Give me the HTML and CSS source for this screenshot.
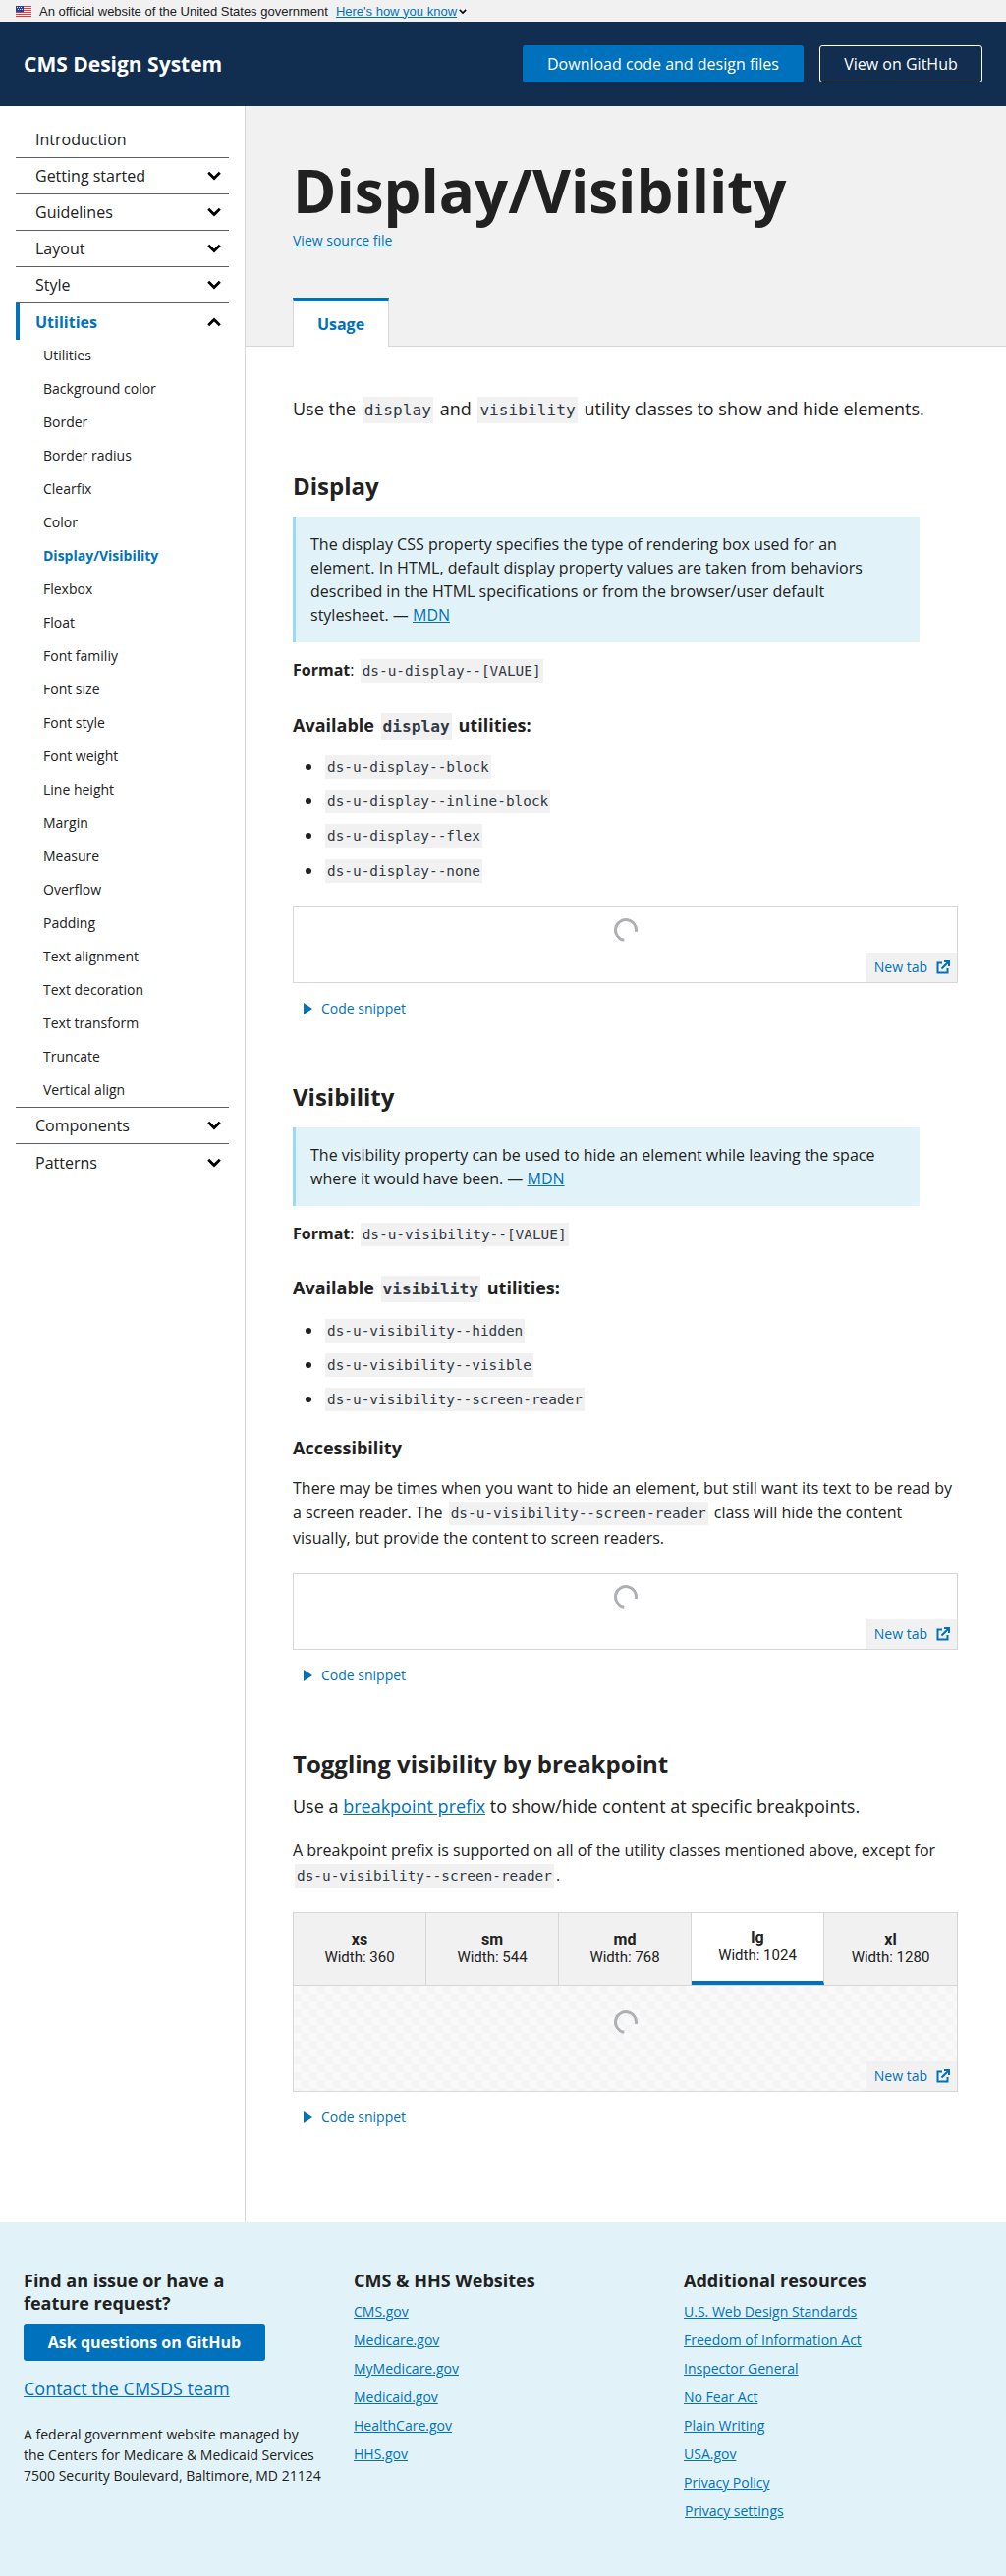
FILE: index.html
```html
<!DOCTYPE html>
<html lang="en">
<head>
    <meta charset="UTF-8">
    <meta name="viewport" content="width=device-width, initial-scale=1.0">
    <title>Display/Visibility</title>
    <link rel="stylesheet" href="styles.css">
</head>
<body>
    <div class="gov-banner">
        <svg class="flag" viewBox="0 0 16 11" width="16" height="11">
            <rect width="16" height="11" fill="#fff"/>
            <path d="M0 0h16v1H0zM0 2h16v1H0zM0 4h16v1H0zM0 6h16v1H0zM0 8h16v1H0zM0 10h16v1H0z" fill="#e0393e"/>
            <rect width="8" height="6" fill="#2e3f8f"/>
            <path d="M1 1h1v1H1zM3 1h1v1H3zM5 1h1v1H5zM2 3h1v1H2zM4 3h1v1H4zM6 3h1v1H6z" fill="#dfe3f5"/>
        </svg>
        <span>An official website of the United States government</span>
        <a href="#">Here's how you know</a>
        <svg class="gov-chevron" viewBox="0 0 10 6" width="8" height="5"><path d="M1 1l4 4 4-4" fill="none" stroke="#000" stroke-width="2"/></svg>
    </div>

    <header class="site-header">
        <div class="site-title">CMS Design System</div>
        <div class="header-actions">
            <a class="btn btn-primary" href="#">Download code and design files</a>
            <a class="btn btn-outline" href="#">View on GitHub</a>
        </div>
    </header>

    <div class="layout">
        <nav class="sidebar">
            <ul class="nav">
                <li class="nav-item">Introduction</li>
                <li class="nav-item">Getting started <svg class="chev" viewBox="0 0 14 10"><path d="M1.200 1.800L7 7.500l5.800-5.700" /></svg></li>
                <li class="nav-item">Guidelines <svg class="chev" viewBox="0 0 14 10"><path d="M1.200 1.800L7 7.500l5.800-5.700" /></svg></li>
                <li class="nav-item">Layout <svg class="chev" viewBox="0 0 14 10"><path d="M1.200 1.800L7 7.500l5.800-5.700" /></svg></li>
                <li class="nav-item">Style <svg class="chev" viewBox="0 0 14 10"><path d="M1.200 1.800L7 7.500l5.800-5.700" /></svg></li>
                <li class="nav-item nav-item-open">Utilities <svg class="chev" viewBox="0 0 14 10"><path d="M1.200 8.200L7 2.500l5.800 5.700" /></svg></li>
            </ul>
            <ul class="subnav">
                <li>Utilities</li>
                <li>Background color</li>
                <li>Border</li>
                <li>Border radius</li>
                <li>Clearfix</li>
                <li>Color</li>
                <li class="current">Display/Visibility</li>
                <li>Flexbox</li>
                <li>Float</li>
                <li>Font familiy</li>
                <li>Font size</li>
                <li>Font style</li>
                <li>Font weight</li>
                <li>Line height</li>
                <li>Margin</li>
                <li>Measure</li>
                <li>Overflow</li>
                <li>Padding</li>
                <li>Text alignment</li>
                <li>Text decoration</li>
                <li>Text transform</li>
                <li>Truncate</li>
                <li>Vertical align</li>
            </ul>
            <ul class="nav nav-end">
                <li class="nav-item">Components <svg class="chev" viewBox="0 0 14 10"><path d="M1.200 1.800L7 7.500l5.800-5.700" /></svg></li>
                <li class="nav-item">Patterns <svg class="chev" viewBox="0 0 14 10"><path d="M1.200 1.800L7 7.500l5.800-5.700" /></svg></li>
            </ul>
        </nav>

        <main class="main">
            <div class="hero">
                <h1>Display/Visibility</h1>
                <a class="source-link" href="#">View source file</a>
                <div class="tabs"><div class="tab">Usage</div></div>
            </div>

            <div class="content">
                <p class="lead">Use the <code>display</code> and <code>visibility</code> utility classes to show and hide elements.</p>

                <h2>Display</h2>
                <div class="callout">The display CSS property specifies the type of rendering box used for an element. In HTML, default display property values are taken from behaviors described in the HTML specifications or from the browser/user default stylesheet. — <a href="#">MDN</a></div>
                <p class="format"><strong>Format</strong>: <code>ds-u-display--[VALUE]</code></p>
                <h3>Available <code>display</code> utilities:</h3>
                <ul class="util-list">
                    <li><code>ds-u-display--block</code></li>
                    <li><code>ds-u-display--inline-block</code></li>
                    <li><code>ds-u-display--flex</code></li>
                    <li><code>ds-u-display--none</code></li>
                </ul>
                <div class="preview">
                    <div class="spinner"></div>
                    <a class="new-tab" href="#">New tab <svg viewBox="0 0 14 14" width="14" height="14"><path d="M11.500 8v4.500h-10v-10H6" class="ext"/><path d="M5.500 8.500L12.500 1.500M8 1h5v5" class="ext"/></svg></a>
                </div>
                <div class="snippet"><span class="tri"></span>Code snippet</div>

                <h2 class="section-2">Visibility</h2>
                <div class="callout">The visibility property can be used to hide an element while leaving the space where it would have been. — <a href="#">MDN</a></div>
                <p class="format"><strong>Format</strong>: <code>ds-u-visibility--[VALUE]</code></p>
                <h3>Available <code>visibility</code> utilities:</h3>
                <ul class="util-list">
                    <li><code>ds-u-visibility--hidden</code></li>
                    <li><code>ds-u-visibility--visible</code></li>
                    <li><code>ds-u-visibility--screen-reader</code></li>
                </ul>
                <h4>Accessibility</h4>
                <p class="body-text">There may be times when you want to hide an element, but still want its text to be read by a screen reader. The <code>ds-u-visibility--screen-reader</code> class will hide the content visually, but provide the content to screen readers.</p>
                <div class="preview preview-after-text">
                    <div class="spinner"></div>
                    <a class="new-tab" href="#">New tab <svg viewBox="0 0 14 14" width="14" height="14"><path d="M11.500 8v4.500h-10v-10H6" class="ext"/><path d="M5.500 8.500L12.500 1.500M8 1h5v5" class="ext"/></svg></a>
                </div>
                <div class="snippet"><span class="tri"></span>Code snippet</div>

                <h2 class="section-2 section-tight">Toggling visibility by breakpoint</h2>
                <p class="intro-text">Use a <a href="#">breakpoint prefix</a> to show/hide content at specific breakpoints.</p>
                <p class="breakpoint-note">A breakpoint prefix is supported on all of the utility classes mentioned above, except for <code>ds-u-visibility--screen-reader</code>.</p>
                <div class="breakpoints">
                    <div class="bp-tabs">
                        <div class="bp-tab"><b>xs</b><span>Width: 360</span></div>
                        <div class="bp-tab"><b>sm</b><span>Width: 544</span></div>
                        <div class="bp-tab"><b>md</b><span>Width: 768</span></div>
                        <div class="bp-tab bp-tab-active"><b>lg</b><span>Width: 1024</span></div>
                        <div class="bp-tab"><b>xl</b><span>Width: 1280</span></div>
                    </div>
                    <div class="bp-frame">
                        <div class="spinner"></div>
                        <a class="new-tab" href="#">New tab <svg viewBox="0 0 14 14" width="14" height="14"><path d="M11.500 8v4.500h-10v-10H6" class="ext"/><path d="M5.500 8.500L12.500 1.500M8 1h5v5" class="ext"/></svg></a>
                    </div>
                </div>
                <div class="snippet"><span class="tri"></span>Code snippet</div>
            </div>
        </main>
    </div>

    <footer class="footer">
        <div class="footer-col footer-col-first">
            <h5>Find an issue or have a feature request?</h5>
            <a class="btn btn-primary btn-ask" href="#">Ask questions on GitHub</a>
            <a class="contact" href="#">Contact the CMSDS team</a>
            <p>A federal government website managed by<br>the Centers for Medicare &amp; Medicaid Services<br>7500 Security Boulevard, Baltimore, MD 21124</p>
        </div>
        <div class="footer-col">
            <h5>CMS &amp; HHS Websites</h5>
            <ul>
                <li><a href="#">CMS.gov</a></li>
                <li><a href="#">Medicare.gov</a></li>
                <li><a href="#">MyMedicare.gov</a></li>
                <li><a href="#">Medicaid.gov</a></li>
                <li><a href="#">HealthCare.gov</a></li>
                <li><a href="#">HHS.gov</a></li>
            </ul>
        </div>
        <div class="footer-col">
            <h5>Additional resources</h5>
            <ul>
                <li><a href="#">U.S. Web Design Standards</a></li>
                <li><a href="#">Freedom of Information Act</a></li>
                <li><a href="#">Inspector General</a></li>
                <li><a href="#">No Fear Act</a></li>
                <li><a href="#">Plain Writing</a></li>
                <li><a href="#">USA.gov</a></li>
                <li><a href="#">Privacy Policy</a></li>
                <li class="privacy-settings"><a href="#">Privacy settings</a></li>
            </ul>
        </div>
    </footer>
</body>
</html>
```

FILE: styles.css
```css
* {
    box-sizing: border-box;
}
body {
    margin: 0;
    font-family: "Open Sans", sans-serif;
    color: #212121;
    background: #fff;
    font-size: 16px;
}
a {
    color: #0071bc;
}
ul {
    list-style: none;
    margin: 0;
    padding: 0;
}
code {
    font-family: "DejaVu Sans Mono", monospace;
    font-size: 0.9em;
    font-weight: inherit;
    line-height: 1;
    background: #f1f1f1;
    padding: 4px 2px;
    margin: 0 2px;
    color: #323a45;
}

/* banner + header */
.gov-banner {
    height: 22px;
    background: #f1f1f1;
    display: flex;
    align-items: center;
    padding-left: 16px;
    font-family: "Liberation Sans", sans-serif;
    font-size: 13px;
}
.flag {
    margin-right: 8px;
}
.gov-banner a {
    margin-left: 8px;
    color: #0071bc;
}
.gov-chevron {
    margin-left: 2px;
}
.site-header {
    height: 86px;
    background: #112e51;
    display: flex;
    align-items: center;
    justify-content: space-between;
    padding: 0 24px;
}
.site-title {
    color: #fff;
    font-size: 21px;
    font-weight: 700;
}
.header-actions {
    display: flex;
    gap: 16px;
}
.btn {
    display: inline-flex;
    align-items: center;
    justify-content: center;
    height: 38px;
    border-radius: 3px;
    color: #fff;
    text-decoration: none;
    font-size: 16px;
}
.btn-primary {
    background: #0071bc;
    width: 286px;
}
.btn-outline {
    width: 166px;
    border: 1px solid #fff;
}

/* sidebar */
.layout {
    display: grid;
    grid-template-columns: 250px 1fr;
    height: 2155px;
}
.sidebar {
    border-right: 1px solid #d6d7d9;
    padding: 16px 16px 0;
}
.nav-item {
    height: 37px;
    display: flex;
    align-items: center;
    justify-content: space-between;
    padding: 0 8px 0 20px;
    border-bottom: 1px solid #5b616b;
    color: #212121;
}
.nav .nav-item:last-child {
    border-bottom: 0;
}
.nav-item-open {
    color: #0071bc;
    font-weight: 700;
    border-left: 4px solid #0071bc;
    padding-left: 16px;
}
.chev {
    width: 14px;
    height: 10px;
}
.chev path {
    fill: none;
    stroke: #000;
    stroke-width: 2.800;
}
.subnav {
    margin-top: -1px;
}
.subnav li {
    height: 34px;
    line-height: 34px;
    padding-left: 28px;
    font-size: 14px;
}
.subnav .current {
    color: #0071bc;
    font-weight: 700;
}
.nav-end {
    border-top: 1px solid #5b616b;
}

/* hero */
.main {
    min-width: 0;
}
.hero {
    height: 245px;
    background: #f1f1f1;
    border-bottom: 1px solid #d6d7d9;
    padding: 46px 0 0 48px;
    position: relative;
}
.hero h1 {
    margin: 0;
    font-size: 60px;
    line-height: 80px;
    font-weight: 700;
}
.source-link {
    display: block;
    font-size: 14px;
    line-height: 20px;
    margin-top: 1px;
}
.tabs {
    position: absolute;
    left: 48px;
    bottom: -1px;
}
.tab {
    width: 98px;
    height: 50px;
    background: #fff;
    border: 1px solid #d6d7d9;
    border-top: 4px solid #0071bc;
    border-bottom: 0;
    color: #0071bc;
    font-weight: 700;
    display: flex;
    align-items: center;
    justify-content: center;
}

/* content */
.content {
    padding: 48px 49px 0 48px;
}
.lead {
    font-size: 18px;
    line-height: 30px;
    margin: 0 0 48px;
}
h2 {
    font-size: 24px;
    line-height: 31px;
    font-weight: 700;
    margin: 0 0 16px;
}
.section-2 {
    margin-top: 62px;
}
.section-tight {
    margin-bottom: 13px;
}
.callout {
    background: #e1f3f8;
    border-left: 3px solid #9bdaf1;
    padding: 16px 15px;
    max-width: 638px;
    line-height: 24px;
}
.format {
    margin: 16px 0 0;
    line-height: 25.600px;
}
h3 {
    font-size: 18px;
    line-height: 23.400px;
    font-weight: 700;
    margin: 31px 0 0;
}
.util-list {
    list-style: disc;
    padding-left: 31px;
    margin: 18px 0 0;
}
.util-list li {
    height: 35.200px;
    line-height: 25.600px;
}
h4 {
    font-size: 18px;
    line-height: 23.400px;
    font-weight: 700;
    margin: 16px 0 0;
}
.body-text {
    margin: 16px 0 0;
    line-height: 25.600px;
}
.intro-text {
    font-size: 18px;
    margin: 0;
    line-height: 30px;
}
.breakpoint-note {
    margin: 18px 0 0;
    line-height: 25.600px;
}
.preview {
    height: 78px;
    margin-top: 14px;
    border: 1px solid #d6d7d9;
    position: relative;
}
.preview-after-text {
    margin-top: 22px;
}
.spinner {
    position: absolute;
    left: 50%;
    top: 11px;
    width: 24px;
    height: 24px;
    margin-left: -12px;
    border-radius: 50%;
    border: 3px solid #aeb0b5;
    border-right-color: transparent;
    transform: rotate(55deg);
}
.new-tab {
    position: absolute;
    right: 0;
    bottom: 0;
    height: 30px;
    padding: 0 7px 0 8px;
    background: #f1f1f1;
    font-size: 14px;
    text-decoration: none;
    display: flex;
    align-items: center;
    gap: 9px;
}
.ext {
    fill: none;
    stroke: #0071bc;
    stroke-width: 2;
}
.snippet {
    display: flex;
    align-items: center;
    font-size: 14px;
    color: #0071bc;
    height: 24px;
    margin-top: 14px;
    padding-left: 11px;
}
.tri {
    width: 0;
    height: 0;
    border-left: 9px solid #0071bc;
    border-top: 6px solid transparent;
    border-bottom: 6px solid transparent;
    margin-right: 9px;
}

/* breakpoint demo */
.breakpoints {
    margin-top: 24px;
    border: 1px solid #d6d7d9;
}
.bp-tabs {
    display: grid;
    grid-template-columns: repeat(5, 1fr);
    height: 74px;
    border-bottom: 1px solid #d6d7d9;
}
.bp-tab {
    display: flex;
    flex-direction: column;
    align-items: center;
    justify-content: center;
    background: #f1f1f1;
    border-right: 1px solid #d6d7d9;
    font-family: "Roboto", sans-serif;
    font-size: 15px;
    line-height: 18px;
}
.bp-tab:last-child {
    border-right: 0;
}
.bp-tab b {
    font-size: 16px;
}
.bp-tab-active {
    background: #fff;
    border-bottom: 4px solid #0071bc;
}
.bp-frame {
    height: 107px;
    position: relative;
    background-color: #fff;
    background-image: repeating-conic-gradient(#f5f5f5 0 25%, #f9f9f9 0 50%);
    background-size: 16px 16px;
}
.bp-frame .spinner {
    top: 25px;
}

/* footer */
.footer {
    height: 360px;
    background: #e1f3f8;
    display: grid;
    grid-template-columns: 336px 336px 1fr;
    padding: 48px 24px 0;
    font-size: 14px;
}
.footer h5 {
    font-size: 18px;
    line-height: 23px;
    font-weight: 700;
    margin: 0;
    max-width: 260px;
}
.btn-ask {
    width: 246px;
    font-weight: 700;
    margin-top: 9px;
}
.contact {
    display: block;
    font-size: 18px;
    line-height: 24px;
    margin-top: 16px;
}
.footer p {
    margin: 24px 0 0;
    line-height: 21px;
}
.footer ul {
    margin-top: 5px;
}
.footer li {
    height: 29px;
    line-height: 29px;
}
.privacy-settings {
    padding-left: 1px;
}
```
